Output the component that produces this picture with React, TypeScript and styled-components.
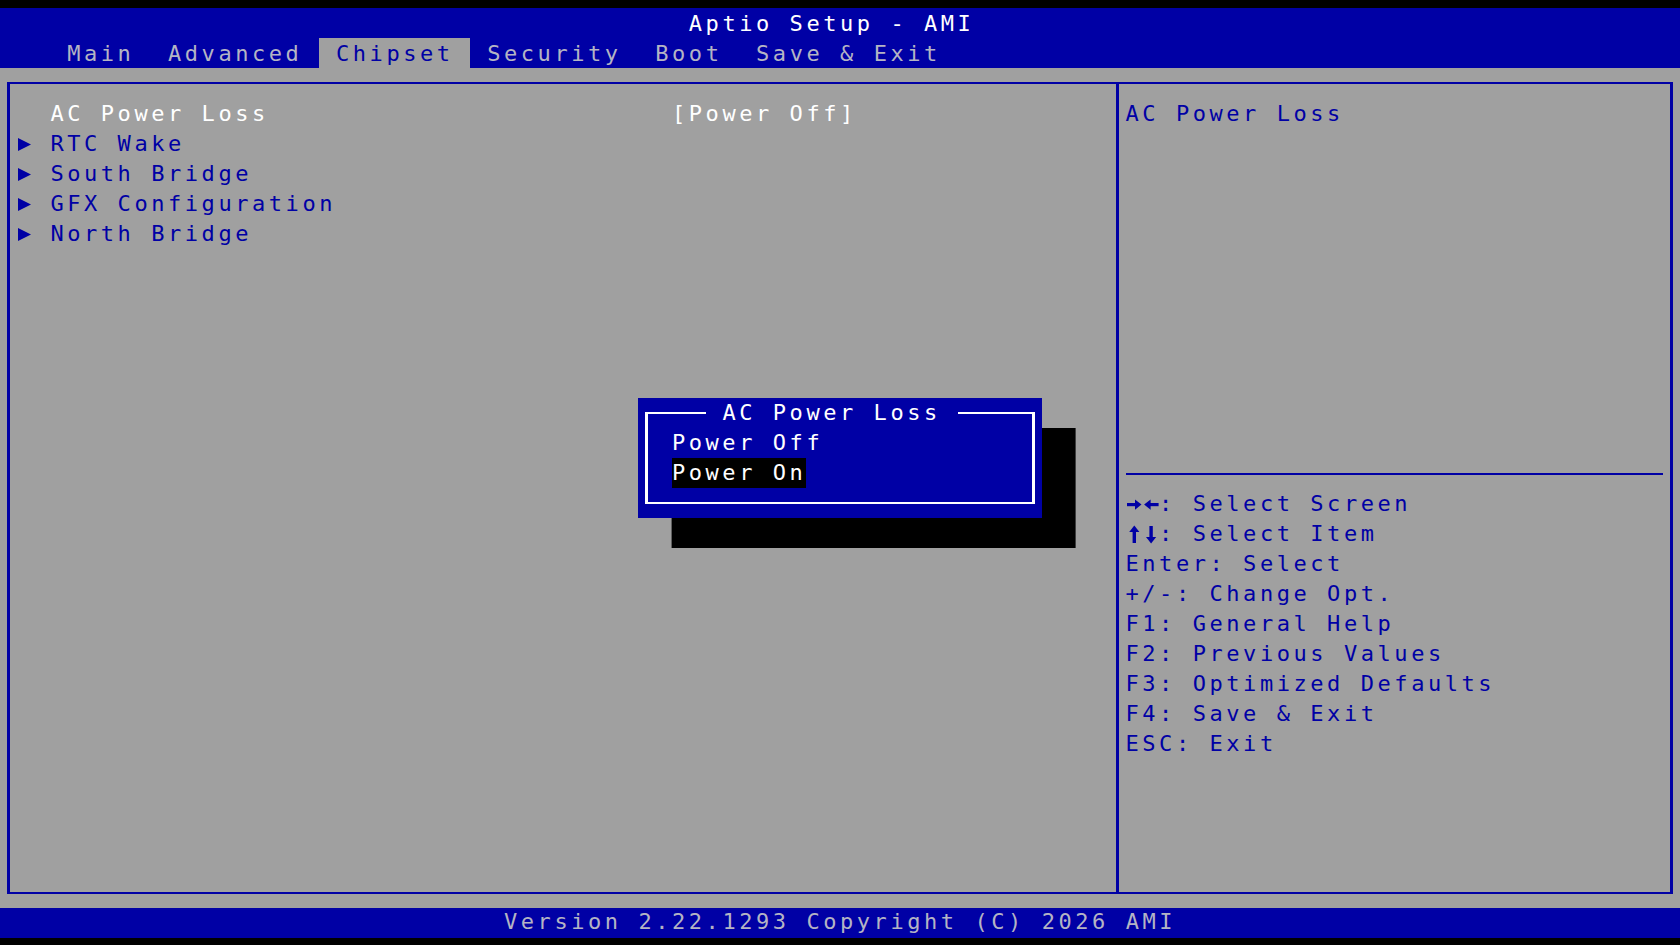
import styled, { createGlobalStyle } from "styled-components";

// BIOS screen is a 100 x 31 character grid
const CH = 16.8;
const ROW = 30;
const BLUE = "#0000a5";
const GRAY = "#a0a0a0";
const DIM = "#b4b4c4";

const GlobalStyle = createGlobalStyle`
  html, body {
    margin: 0;
    padding: 0;
    background: #000;
  }
`;

const menuItems = [
  { label: "AC Power Loss", value: "[Power Off]", selected: true, sub: false },
  { label: "RTC Wake", sub: true },
  { label: "South Bridge", sub: true },
  { label: "GFX Configuration", sub: true },
  { label: "North Bridge", sub: true },
];

const tabs = ["Main", "Advanced", "Chipset", "Security", "Boot", "Save & Exit"];

type Help = { key: string; text: string; icon?: "lr" | "ud" };

const helpLines: Help[] = [
  { key: "→←", text: ": Select Screen", icon: "lr" },
  { key: "↑↓", text: ": Select Item", icon: "ud" },
  { key: "Enter", text: ": Select" },
  { key: "+/-", text: ": Change Opt." },
  { key: "F1", text: ": General Help" },
  { key: "F2", text: ": Previous Values" },
  { key: "F3", text: ": Optimized Defaults" },
  { key: "F4", text: ": Save & Exit" },
  { key: "ESC", text: ": Exit" },
];

function SubArrow() {
  return (
    <svg width="15" height="15" viewBox="0 0 15 15">
      <polygon points="1,1 14,7.5 1,14" fill={BLUE} />
    </svg>
  );
}

// two-cell arrow key glyphs used in the help list
function KeyArrows({ kind, label }: { kind: "lr" | "ud"; label: string }) {
  return (
    <svg width={CH * 2} height={ROW} viewBox="0 0 33.6 30" aria-label={label}>
      {kind === "lr" ? (
        <g fill={BLUE}>
          <rect x="1" y="14" width="9" height="3.2" />
          <polygon points="9,10.5 15.5,15.6 9,20.7" />
          <rect x="23.6" y="14" width="9" height="3.2" />
          <polygon points="24.6,10.5 18.1,15.6 24.6,20.7" />
        </g>
      ) : (
        <g fill={BLUE}>
          <rect x="6.6" y="12" width="3.4" height="12" />
          <polygon points="3.2,13 8.3,6.5 13.4,13" />
          <rect x="23.4" y="7" width="3.4" height="12" />
          <polygon points="20,18 25.1,24.5 30.2,18" />
        </g>
      )}
    </svg>
  );
}

export default function App() {
  return (
    <>
      <GlobalStyle />
      <Screen>
        <Header>
          <Title>Aptio Setup - AMI</Title>
          <TabBar>
            {tabs.map((t) => (
              <Tab key={t} $active={t === "Chipset"}>
                {t}
              </Tab>
            ))}
          </TabBar>
        </Header>

        <Body>
          <Frame>
            <LeftPane>
              {menuItems.map((m) => (
                <MenuRow key={m.label}>
                  <ArrowCell>{m.sub && <SubArrow />}</ArrowCell>
                  <Label $selected={!!m.selected}>{m.label}</Label>
                  {m.value && <Value>{m.value}</Value>}
                </MenuRow>
              ))}
            </LeftPane>
            <Divider />
            <RightPane>
              <HelpTop>AC Power Loss</HelpTop>
              <HelpRule />
              {helpLines.map((h) => (
                <HelpLine key={h.key}>
                  {h.icon ? (
                    <KeyIcon>
                      <KeyArrows kind={h.icon} label={h.key} />
                    </KeyIcon>
                  ) : (
                    h.key
                  )}
                  {h.text}
                </HelpLine>
              ))}
            </RightPane>
          </Frame>
        </Body>

        <Footer>Version 2.22.1293 Copyright (C) 2026 AMI</Footer>

        <Popup>
          <PopupFrame>
            <PopupTitle> AC Power Loss </PopupTitle>
            <Option $selected={false}>Power Off</Option>
            <Option $selected>Power On</Option>
          </PopupFrame>
        </Popup>
      </Screen>
    </>
  );
}

const Screen = styled.div`
  position: relative;
  width: 1680px;
  height: 945px;
  box-sizing: border-box;
  padding: 8px 0 7px;
  display: flex;
  flex-direction: column;
  background: #000;
  font-family: "DejaVu Sans Mono", "Liberation Mono", monospace;
  font-size: 22px;
  letter-spacing: ${CH - 22 * 0.602}px;
  line-height: ${ROW}px;
  white-space: pre;
  overflow: hidden;
`;

const Header = styled.div`
  background: ${BLUE};
  height: ${ROW * 2}px;
  display: flex;
  flex-direction: column;
`;

const Title = styled.div`
  height: ${ROW}px;
  line-height: ${ROW + 2}px;
  padding-left: ${CH * 41}px;
  color: #fff;
`;

const TabBar = styled.div`
  height: ${ROW}px;
  line-height: ${ROW + 2}px;
  display: flex;
  padding-left: ${CH * 3}px;
`;

const Tab = styled.div<{ $active: boolean }>`
  padding: 0 ${CH}px;
  background: ${({ $active }) => ($active ? GRAY : "transparent")};
  color: ${({ $active }) => ($active ? BLUE : DIM)};
`;

const Body = styled.div`
  flex: 1;
  display: flex;
  background: ${GRAY};
  padding: 14px 7px;
`;

const Frame = styled.div`
  flex: 1;
  display: grid;
  grid-template-columns: 1fr 3px ${CH * 32 + 13.8}px;
  border-style: solid;
  border-color: ${BLUE};
  border-width: 2px 3px;
`;

const LeftPane = styled.div`
  padding: 15px 0 0 ${CH - 10}px;
  display: flex;
  flex-direction: column;
`;

const MenuRow = styled.div`
  height: ${ROW}px;
  display: grid;
  grid-template-columns: ${CH * 2}px ${CH * 37}px 1fr;
  align-items: center;
`;

const ArrowCell = styled.div`
  display: flex;
  align-items: center;
  height: ${ROW}px;
`;

const Label = styled.span<{ $selected: boolean }>`
  color: ${({ $selected }) => ($selected ? "#fff" : BLUE)};
`;

const Value = styled.span`
  color: #fff;
`;

const Divider = styled.div`
  background: ${BLUE};
`;

const RightPane = styled.div`
  padding: 14px 6.9px 0 6.9px;
  display: flex;
  flex-direction: column;
  color: ${BLUE};
`;

const HelpTop = styled.div`
  height: ${ROW * 12}px;
  padding-top: 1px;
`;

const HelpRule = styled.div`
  height: ${ROW}px;
  display: flex;
  align-items: center;

  &::after {
    content: "";
    flex: 1;
    height: 2px;
    background: ${BLUE};
  }
`;

const HelpLine = styled.div`
  height: ${ROW}px;
  display: flex;
  align-items: center;
`;

const KeyIcon = styled.span`
  display: inline-flex;
  width: ${CH * 2}px;
  height: ${ROW}px;
`;

const Footer = styled.div`
  height: ${ROW}px;
  line-height: ${ROW - 3}px;
  background: ${BLUE};
  color: ${DIM};
  padding-left: ${CH * 30}px;
`;

const Popup = styled.div`
  position: absolute;
  left: ${CH * 38}px;
  top: ${8 + ROW * 13}px;
  width: ${CH * 24}px;
  height: ${ROW * 4}px;
  box-sizing: border-box;
  padding: 14px 6.9px;
  background: ${BLUE};
  box-shadow: ${CH * 2}px ${ROW}px 0 #000;
  display: flex;
`;

const PopupFrame = styled.div`
  position: relative;
  flex: 1;
  border-style: solid;
  border-color: #fff;
  border-width: 2px 3px;
  padding: 14px 0 0 ${CH * 2 - 9.9}px;
  display: flex;
  flex-direction: column;
  align-items: flex-start;
`;

const PopupTitle = styled.div`
  position: absolute;
  top: -16px;
  left: ${CH * 4 - 9.9}px;
  height: ${ROW}px;
  background: ${BLUE};
  color: #fff;
`;

const Option = styled.div<{ $selected: boolean }>`
  height: ${ROW}px;
  color: #fff;
  background: ${({ $selected }) => ($selected ? "#000" : "transparent")};
`;
